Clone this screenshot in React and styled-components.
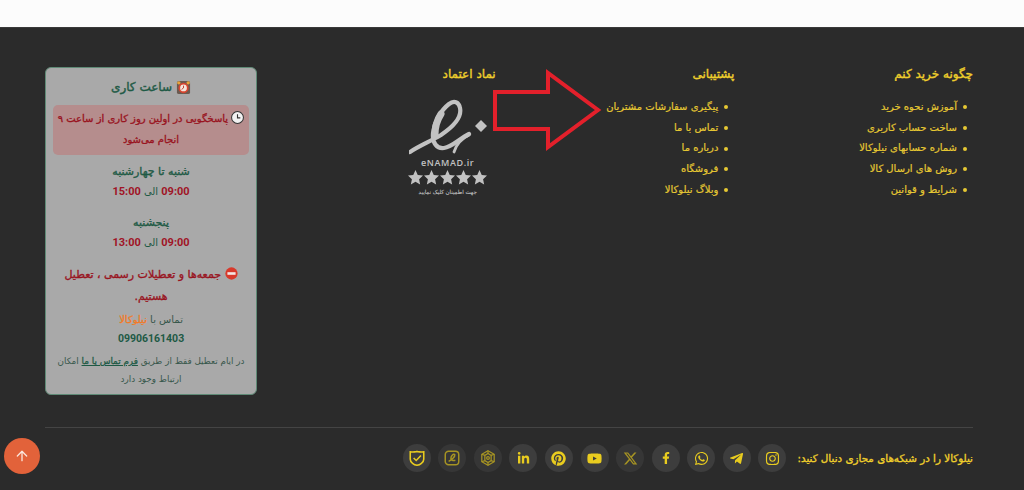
import styled, { createGlobalStyle } from 'styled-components'
import { ArrowUp } from 'lucide-react'
import { FaInstagram, FaTelegramPlane, FaWhatsapp, FaFacebookF, FaYoutube, FaPinterest, FaLinkedinIn } from 'react-icons/fa'
import { FaXTwitter } from 'react-icons/fa6'

const GlobalStyle = createGlobalStyle`
  html, body { margin: 0; padding: 0; background: #2b2b2b; overflow: hidden; }
  body { font-family: "DejaVu Sans", "Noto Sans", sans-serif; }
  * { box-sizing: border-box; }
`

const TopStrip = styled.div`
  height: 27px;
  background: #fcfcfc;
`
const Footer = styled.footer`
  direction: rtl;
  height: 463px;
  background: #2b2b2b;
  border-top: 1px solid #3a3a3a;
  padding: 39px 51px 0 45px;
  position: relative;
`
const Columns = styled.div`
  display: grid;
  grid-template-columns: repeat(4, 212px);
  justify-content: space-between;
  height: 328px;
`
const Column = styled.div`
  display: flex;
  flex-direction: column;
`
const ColumnTitle = styled.h4`
  margin: 0 0 16px;
  font-size: 12px;
  line-height: 14px;
  font-weight: 400;
  -webkit-text-stroke: 0.4px currentColor;
  color: #efcf2c;
`
const LinkList = styled.ul`
  margin: 0;
  padding: 0 6px 0 0;
  list-style: none;
  color: #e6c833;
`
const LinkItem = styled.li`
  display: flex;
  align-items: center;
  gap: 6px;
  font-size: 10px;
  line-height: 20.7px;
  white-space: nowrap;
  -webkit-text-stroke: 0.2px currentColor;
  &::before {
    content: "";
    width: 4px;
    height: 4px;
    border-radius: 50%;
    background: #e6c833;
  }
`
const Badge = styled.div`
  width: 78px;
  margin: 2px 9px 0 0;
  direction: ltr;
  display: flex;
  flex-direction: column;
  align-items: center;
  color: #c2c2c2;
`
const BadgeName = styled.span`
  font-family: "Open Sans", sans-serif;
  font-size: 9px;
  font-weight: 600;
  line-height: 13px;
  letter-spacing: 0.6px;
`
const BadgeStars = styled.div`
  display: flex;
  gap: 1px;
  margin-top: 1px;
`
const BadgeHint = styled.span`
  direction: rtl;
  font-size: 5.5px;
  line-height: 10px;
  margin-top: 2px;
  -webkit-text-stroke: 0.1px currentColor;
`
const HoursCard = styled.aside`
  background: #a9a9a9;
  border: 1px solid #5f8a76;
  border-radius: 6px;
  padding: 7px 7px 0;
  text-align: center;
  height: 328px;
`
const CardTitle = styled.h3`
  margin: 0 0 6px;
  font-size: 12px;
  line-height: 24px;
  font-weight: 400;
  -webkit-text-stroke: 0.4px currentColor;
  color: #1e5a45;
  display: flex;
  justify-content: center;
  align-items: center;
  gap: 4px;
`
const Notice = styled.div`
  background: #b58d8d;
  border-radius: 5px;
  height: 50px;
  padding-top: 3px;
  margin-bottom: 7px;
  font-size: 10px;
  line-height: 21px;
  -webkit-text-stroke: 0.35px currentColor;
  color: #99141f;
`
const DayName = styled.div`
  font-size: 11px;
  line-height: 20px;
  -webkit-text-stroke: 0.35px currentColor;
  color: #1e5a45;
`
const TimeRow = styled.div`
  font-size: 10px;
  line-height: 20px;
  color: #1e5a45;
  margin-bottom: 11px;
`
const Hour = styled.b`
  font-family: Roboto, sans-serif;
  font-size: 11px;
  color: #a01426;
`
const Closed = styled.div`
  font-size: 11px;
  line-height: 22px;
  -webkit-text-stroke: 0.35px currentColor;
  color: #99141f;
  padding: 0 6px;
`
const ContactLine = styled.div`
  font-size: 10px;
  line-height: 19px;
  margin-top: 2px;
  color: #37574b;
`
const Brand = styled.span`
  color: #f27a26;
  -webkit-text-stroke: 0.3px currentColor;
`
const Phone = styled.div`
  font-family: Roboto, sans-serif;
  font-size: 10.5px;
  font-weight: 700;
  line-height: 19px;
  color: #1e5a45;
`
const SmallNote = styled.div`
  font-size: 8.8px;
  line-height: 18px;
  margin-top: 4px;
  color: #37574b;
`
const NoteLink = styled.a`
  -webkit-text-stroke: 0.3px currentColor;
  color: #1e5a45;
  text-decoration: underline;
`
const Divider = styled.hr`
  margin: 32px 0 16px;
  border: 0;
  border-top: 1px solid #444;
`
const SocialRow = styled.div`
  display: flex;
  align-items: center;
`
const SocialLabel = styled.strong`
  font-size: 10.35px;
  font-weight: 400;
  -webkit-text-stroke: 0.35px currentColor;
  color: #efcf2c;
  white-space: nowrap;
  margin-left: 11px;
`
const SocialList = styled.div`
  display: flex;
  gap: 7.6px;
`
const SocialIcon = styled.a`
  width: 28px;
  height: 28px;
  border-radius: 50%;
  background: #3d3d3d;
  color: #e9cc1f;
  display: flex;
  align-items: center;
  justify-content: center;
  font-size: ${p => p.$size || 13}px;
  opacity: ${p => p.$dim ? 0.65 : 1};
`
const ScrollTop = styled.button`
  position: fixed;
  left: 4px;
  top: 438px;
  width: 36px;
  height: 36px;
  padding: 0;
  border: 0;
  border-radius: 50%;
  background: #e2623a;
  color: #fbe5dc;
  display: flex;
  align-items: center;
  justify-content: center;
`
const AnnotationArrow = styled.svg`
  position: absolute;
  left: 490px;
  top: 39px;
`

const AlarmClock = () => (
  <svg width="15" height="15" viewBox="0 0 16 16">
    <rect x="1" y="1" width="14" height="14" rx="2" fill="#6b5a50" />
    <circle cx="8" cy="8.5" r="5.5" fill="#d8452f" />
    <circle cx="8" cy="8.5" r="3.6" fill="#f3e6dc" />
    <path d="M8 6v2.5L6 10" stroke="#c0392b" strokeWidth="1" fill="none" />
    <circle cx="3" cy="3" r="1.8" fill="#e8a33a" />
    <circle cx="13" cy="3" r="1.8" fill="#e8a33a" />
  </svg>
)
const ClockFace = () => (
  <svg width="13" height="13" viewBox="0 0 14 14" style={{ verticalAlign: '-2px' }}>
    <circle cx="7" cy="7" r="6.4" fill="#f2f2f2" stroke="#333" strokeWidth="1.1" />
    <path d="M7 3.4V7.4H10" stroke="#333" strokeWidth="1.2" fill="none" />
  </svg>
)
const NoEntry = () => (
  <svg width="13" height="13" viewBox="0 0 14 14" style={{ verticalAlign: '-2px' }}>
    <circle cx="7" cy="7" r="6.6" fill="#d8392b" />
    <rect x="2.6" y="5.6" width="8.8" height="2.8" fill="#f4e6e4" />
  </svg>
)
const Star = () => (
  <svg width="15" height="15" viewBox="0 0 20 20">
    <polygon fill="currentColor" points="10,0 13,6.6 20,7.4 14.8,12.2 16.2,19.4 10,15.8 3.8,19.4 5.2,12.2 0,7.4 7,6.6" />
  </svg>
)
const EnamadMark = () => (
  <svg width="78" height="57" viewBox="0 0 78 57" fill="none" stroke="currentColor" strokeLinecap="round">
    <path strokeWidth="4.2" d="M1 53C10 47 20 43 32 36C44 28 53 18 51 9C50 3 45 1 40 5C31 12 25 24 24 34C23 44 28 50 35 49C43 48 50 40 60 35" />
    <path strokeWidth="7" d="M32 15C28 21 26 28 26 36" />
    <path strokeWidth="2.8" d="M45 53C47 46 52 40 60 36" />
    <polygon fill="currentColor" stroke="none" points="72,21 78,27 72,33 66,27" />
  </svg>
)
const ShieldCheck = () => (
  <svg width="18" height="18" viewBox="0 0 16 16" fill="none" stroke="currentColor" strokeWidth="1.4">
    <path d="M2 2.5C5 3 8 2.5 8 1.5C8 2.5 11 3 14 2.5V9C14 12 10.5 14 8 14.5C5.5 14 2 12 2 9Z" />
    <path d="M5 8L7.3 10.2L11.5 5.8" />
  </svg>
)
const SquareMark = () => (
  <svg width="18" height="18" viewBox="0 0 16 16" fill="none" stroke="currentColor" strokeWidth="1.3">
    <rect x="2" y="2" width="12" height="12" rx="3" />
    <path d="M5 11C7 10 11 7 10.5 5C9.5 3.8 7 6 7 8.5C7 10 9 10.5 11 10" />
  </svg>
)
const FlowerMark = () => (
  <svg width="18" height="18" viewBox="0 0 16 16" fill="none" stroke="currentColor" strokeWidth="1.1">
    <path d="M8 1.5L13.5 4.7V11.3L8 14.5L2.5 11.3V4.7Z" />
    <path d="M8 4L10.8 5.7V10.3L8 12L5.2 10.3V5.7Z" />
    <circle cx="8" cy="8" r="1.2" />
    <path d="M8 1.5V4M13.5 4.7L10.8 5.7M13.5 11.3L10.8 10.3M8 14.5V12M2.5 11.3L5.2 10.3M2.5 4.7L5.2 5.7" />
  </svg>
)

const buyLinks = ['آموزش نحوه خرید', 'ساخت حساب کاربری', 'شماره حسابهای نیلوکالا', 'روش های ارسال کالا', 'شرایط و قوانین']
const supportLinks = ['پیگیری سفارشات مشتریان', 'تماس با ما', 'درباره ما', 'فروشگاه', 'وبلاگ نیلوکالا']

const socials = [
  { id: 'instagram', icon: <FaInstagram />, size: 15 },
  { id: 'telegram', icon: <FaTelegramPlane />, size: 15 },
  { id: 'whatsapp', icon: <FaWhatsapp />, size: 15 },
  { id: 'facebook', icon: <FaFacebookF />, size: 12 },
  { id: 'x', icon: <FaXTwitter />, size: 15, dim: true },
  { id: 'youtube', icon: <FaYoutube />, size: 15 },
  { id: 'pinterest', icon: <FaPinterest />, size: 15 },
  { id: 'linkedin', icon: <FaLinkedinIn />, size: 13 },
  { id: 'flower', icon: <FlowerMark />, dim: true },
  { id: 'square', icon: <SquareMark />, dim: true },
  { id: 'shield', icon: <ShieldCheck /> },
]

function App() {
  return (
    <>
      <GlobalStyle />
      <TopStrip />
      <Footer>
        <Columns>
          <Column>
            <ColumnTitle>چگونه خرید کنم</ColumnTitle>
            <LinkList>
              {buyLinks.map(l => <LinkItem key={l}>{l}</LinkItem>)}
            </LinkList>
          </Column>
          <Column>
            <ColumnTitle>پشتیبانی</ColumnTitle>
            <LinkList>
              {supportLinks.map(l => <LinkItem key={l}>{l}</LinkItem>)}
            </LinkList>
          </Column>
          <Column>
            <ColumnTitle>نماد اعتماد</ColumnTitle>
            <Badge>
              <EnamadMark />
              <BadgeName>eNAMAD.ir</BadgeName>
              <BadgeStars>
                {[0, 1, 2, 3, 4].map(i => <Star key={i} />)}
              </BadgeStars>
              <BadgeHint>جهت اطمینان کلیک نمایید</BadgeHint>
            </Badge>
          </Column>
          <HoursCard>
            <CardTitle><AlarmClock />ساعت کاری</CardTitle>
            <Notice><ClockFace /> پاسخگویی در اولین روز کاری از ساعت ۹ انجام می‌شود</Notice>
            <DayName>شنبه تا چهارشنبه</DayName>
            <TimeRow><Hour>09:00</Hour> الی <Hour>15:00</Hour></TimeRow>
            <DayName>پنجشنبه</DayName>
            <TimeRow><Hour>09:00</Hour> الی <Hour>13:00</Hour></TimeRow>
            <Closed><NoEntry /> جمعه‌ها و تعطیلات رسمی ، تعطیل هستیم.</Closed>
            <ContactLine>تماس با <Brand>نیلوکالا</Brand></ContactLine>
            <Phone>09906161403</Phone>
            <SmallNote>در ایام تعطیل فقط از طریق <NoteLink>فرم تماس با ما</NoteLink> امکان ارتباط وجود دارد</SmallNote>
          </HoursCard>
        </Columns>
        <Divider />
        <SocialRow>
          <SocialLabel>نیلوکالا را در شبکه‌های مجازی دنبال کنید:</SocialLabel>
          <SocialList>
            {socials.map(s => <SocialIcon key={s.id} $size={s.size} $dim={s.dim}>{s.icon}</SocialIcon>)}
          </SocialList>
        </SocialRow>
        <AnnotationArrow width="114" height="86" viewBox="0 0 114 86">
          <polygon points="5,25 58,25 58,6 108,43 58,80 58,62 5,62" fill="none" stroke="#e3202b" strokeWidth="4" />
        </AnnotationArrow>
      </Footer>
      <ScrollTop aria-label="بازگشت به بالا"><ArrowUp size={16} /></ScrollTop>
    </>
  )
}

export default App
